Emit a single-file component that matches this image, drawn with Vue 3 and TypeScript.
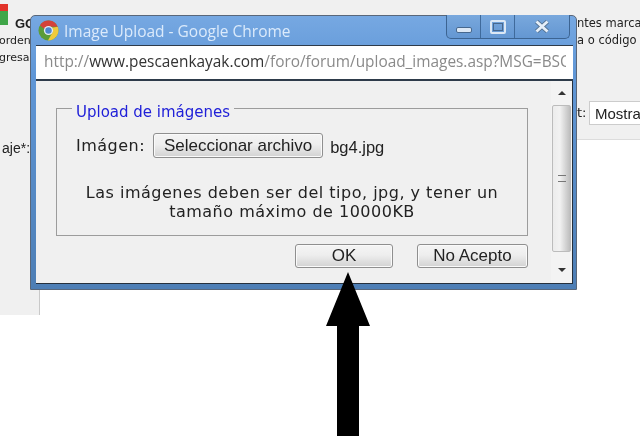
<script setup lang="ts">
const title = 'Image Upload - Google Chrome'
</script>

<template>
  <div class="page">
    <div class="top">
      <div class="logo"></div>
      <div class="left-text">
        <b class="go">GOOGLE</b>
        <span>orden</span>
        <span>gresar</span>
      </div>
      <div class="right-text">
        <span>ntes marcados</span>
        <span>a o código</span>
      </div>
      <label class="mostrar-label">t:</label>
      <div class="mostrar">Mostrar</div>
    </div>
    <div class="lower">
      <div class="gutter"><span class="aje">aje*:</span></div>
      <div class="blank"></div>
    </div>

    <section class="win">
      <header class="titlebar">
        <svg class="chrome" width="21" height="21" viewBox="0 0 22 22">
          <circle cx="11" cy="11" r="10.5" fill="#5b9c3a" />
          <path d="M2 5.5A10.5 10.5 0 0 1 20.6 7H11A4.2 4.2 0 0 0 7 9.6Z" fill="#d4423a" />
          <path d="M20.7 7.2A10.5 10.5 0 0 1 10.4 21.5L15 13.4A4.4 4.4 0 0 0 14.4 8Z" fill="#efcb3c" />
          <circle cx="11" cy="11" r="4.8" fill="#e8eef8" />
          <circle cx="11" cy="11" r="3.4" fill="#4d86cf" />
        </svg>
        <span class="wtitle">{{ title }}</span>
        <div class="controls">
          <div class="ctl min"><i></i></div>
          <div class="ctl max"><i></i></div>
          <div class="ctl close">
            <svg width="16" height="13" viewBox="0 0 16 13"><path d="M2.5 1.5 13.5 11.5M13.5 1.5 2.5 11.5" stroke="#53708f" stroke-width="4.4" /><path d="M2.5 1.5 13.5 11.5M13.5 1.5 2.5 11.5" stroke="#e6eff9" stroke-width="2.8" /></svg>
          </div>
        </div>
      </header>
      <div class="urlbar">
        <div class="url-inner"><span class="u">http://</span><span class="d">www.pescaenkayak.com</span><span class="u">/foro/forum/upload_images.asp?MSG=BSC</span></div>
      </div>
      <div class="body">
        <div class="content">
          <fieldset class="fs">
            <legend>Upload de imágenes</legend>
            <div class="file-row">
              <span>Imágen:</span>
              <button class="btn sel">Seleccionar archivo</button>
              <span class="fname">bg4.jpg</span>
            </div>
            <p class="note">Las imágenes deben ser del tipo, jpg, y tener un<br />tamaño máximo de 10000KB</p>
          </fieldset>
          <div class="actions">
            <button class="btn ok">OK</button>
            <button class="btn no">No Acepto</button>
          </div>
        </div>
        <div class="scroll">
          <div class="arrow up"></div>
          <div class="thumb"><i></i></div>
          <div class="arrow down"></div>
        </div>
      </div>
    </section>

    <svg class="big-arrow" width="46" height="164" viewBox="0 0 46 164">
      <path d="M23 0 45 54H34V164H12V54H1Z" fill="#000" />
    </svg>
  </div>
</template>

<style>
html, body { margin: 0; background: #fff; }
</style>

<style scoped>
.page {
  position: relative;
  width: 640px;
  height: 436px;
  overflow: hidden;
  background: #fff;
  display: flex;
  flex-direction: column;
  font-family: "DejaVu Sans", sans-serif;
  filter: blur(0.5px);
}
.top {
  position: relative;
  height: 139px;
  background: #f0f0f0;
  flex: none;
}
.logo {
  position: absolute;
  left: 0;
  top: 4px;
  width: 8px;
  height: 21px;
  background: linear-gradient(#e2332a 0 7px, #3fa648 7px);
}
.left-text {
  position: absolute;
  left: -1px;
  top: 15px;
  display: flex;
  flex-direction: column;
  font-size: 11px;
  line-height: 17px;
  color: #222;
}
.go { margin-left: 16px; font-family: "Liberation Sans", sans-serif; font-size: 13px; }
.right-text {
  position: absolute;
  left: 577px;
  top: 15px;
  display: flex;
  flex-direction: column;
  font-size: 11.5px;
  line-height: 17px;
  color: #222;
  white-space: nowrap;
}
.mostrar-label { position: absolute; left: 577px; top: 105px; font-size: 13px; color: #222; }
.mostrar {
  position: absolute;
  left: 589px;
  top: 101px;
  width: 70px;
  height: 24px;
  box-sizing: border-box;
  padding: 3px 5px;
  background: #fff;
  border: 1px solid #ccc;
  font-family: "Liberation Sans", sans-serif;
  font-size: 15px;
  color: #222;
}
.lower { flex: 1; display: flex; }
.gutter {
  position: relative;
  width: 39px;
  height: 176px;
  background: #f0f0f0;
  border-right: 1px solid #c9c9c9;
}
.aje { position: absolute; left: 2px; top: 1px; font-family: "Liberation Sans", sans-serif; font-size: 14px; color: #222; white-space: nowrap; }
.blank { flex: 1; border-top: 1px solid #dcdcdc; }

.win {
  position: absolute;
  left: 30px;
  top: 15px;
  width: 547px;
  height: 275px;
  box-sizing: border-box;
  padding: 0 3px 5px 5px;
  background: linear-gradient(#76a8e2, #5f96d6 60px, #4d7eb5);
  border: 1px solid #59677a;
  border-radius: 5px 5px 0 0;
  display: flex;
  flex-direction: column;
}
.titlebar { position: relative; height: 29px; display: flex; align-items: center; flex: none; }
.chrome { margin-left: 2px; margin-top: 0; }
.wtitle {
  margin-left: 5px;
  font-family: "Open Sans", sans-serif;
  font-size: 15.5px;
  color: #dbeafb;
  white-space: nowrap;
}
.controls {
  position: absolute;
  right: 3px;
  top: -1px;
  height: 23px;
  display: flex;
  border: 1px solid #3c6492;
  border-top: 0;
  border-radius: 0 0 5px 5px;
  background: linear-gradient(#79a8dd, #6497d2);
}
.ctl { display: flex; align-items: center; justify-content: center; border-left: 1px solid #3f6a9b; }
.ctl:first-child { border-left: 0; }
.min { width: 33px; }
.min i { width: 16px; height: 6px; margin-top: 7px; border-radius: 2px; background: #dce8f5; border: 1px solid #47688e; box-sizing: border-box; }
.max { width: 33px; }
.max i { width: 16px; height: 14px; box-sizing: border-box; border: 2px solid #dce8f5; outline: 1px solid #47688e; outline-offset: -4px; border-radius: 2px; }
.close { width: 54px; }

.urlbar {
  height: 36px;
  box-sizing: border-box;
  flex: none;
  background: #fff;
  border: 1px solid #2e3b4a;
  border-width: 1px 0 2px;
  padding: 0 0 0 8px;
  line-height: 32px;
  font-family: "Open Sans", sans-serif;
  font-size: 15.4px;
}
.url-inner { width: 522px; overflow: hidden; white-space: nowrap; }
.u { color: #8a8a8a; }
.d { color: #333; }

.body {
  flex: 1;
  min-height: 0;
  display: flex;
  background: #f0f0f0;
  border-bottom: 1px solid #26303c;
  border-right: 1px solid #26303c;
}
.content { flex: 1; padding: 15px 0 0 20px; min-width: 0; }
.fs {
  margin: 0;
  width: 472px;
  height: 140px;
  box-sizing: border-box;
  border: 1px solid #9c9c9c;
  padding: 5px 20px 0 19px;
  font-size: 16px;
}
legend {
  padding: 7px 4px 0;
  margin-left: -4px;
  color: #2020d8;
  font-size: 15px;
  font-family: "DejaVu Sans", sans-serif;
  line-height: 18px;
}
.file-row { display: flex; align-items: center; color: #222; font-size: 16px; letter-spacing: 0.5px; margin-top: 7px; }
.sel { width: 170px; height: 25px; margin-left: 8px; letter-spacing: 0; }
.fname { margin-left: 7px; margin-top: 3px; font-family: "Liberation Sans", sans-serif; font-size: 16.5px; letter-spacing: 0; }
.note { margin: 25px -20px 0 -19px; text-align: center; font-size: 16px; letter-spacing: 0.5px; line-height: 19px; color: #222; }
.btn {
  box-sizing: border-box;
  padding: 0;
  border: 1px solid #8f8f8f;
  border-radius: 3px;
  background: linear-gradient(#f4f4f4, #eee 45%, #d2d2d2);
  font-family: "Liberation Sans", sans-serif;
  font-size: 17px;
  color: #222;
  box-shadow: inset 0 0 0 1px #fafafa;
}
.actions { display: flex; justify-content: flex-end; width: 472px; gap: 24px; margin-top: 8px; }
.ok { width: 98px; height: 24px; }
.no { width: 111px; height: 24px; }
.scroll { width: 21px; flex: none; background: #f3f3f3; display: flex; flex-direction: column; align-items: center; }
.arrow { width: 0; height: 0; border-left: 4px solid transparent; border-right: 4px solid transparent; flex: none; }
.up { border-bottom: 4px solid #333; margin: 10px 0 10px; }
.down { border-top: 4px solid #333; margin-top: 16px; }
.thumb {
  width: 19px;
  flex: none;
  height: 147px;
  box-sizing: border-box;
  background: linear-gradient(90deg, #ececec, #f2f2f2 40%, #bdbdbd);
  border: 1px solid #bcbcbc;
  border-radius: 2px;
  display: flex;
  align-items: center;
  justify-content: center;
}
.thumb i { width: 8px; height: 5px; border-top: 1px solid #777; border-bottom: 1px solid #777; }

.big-arrow { position: absolute; left: 325px; top: 272px; }
</style>
